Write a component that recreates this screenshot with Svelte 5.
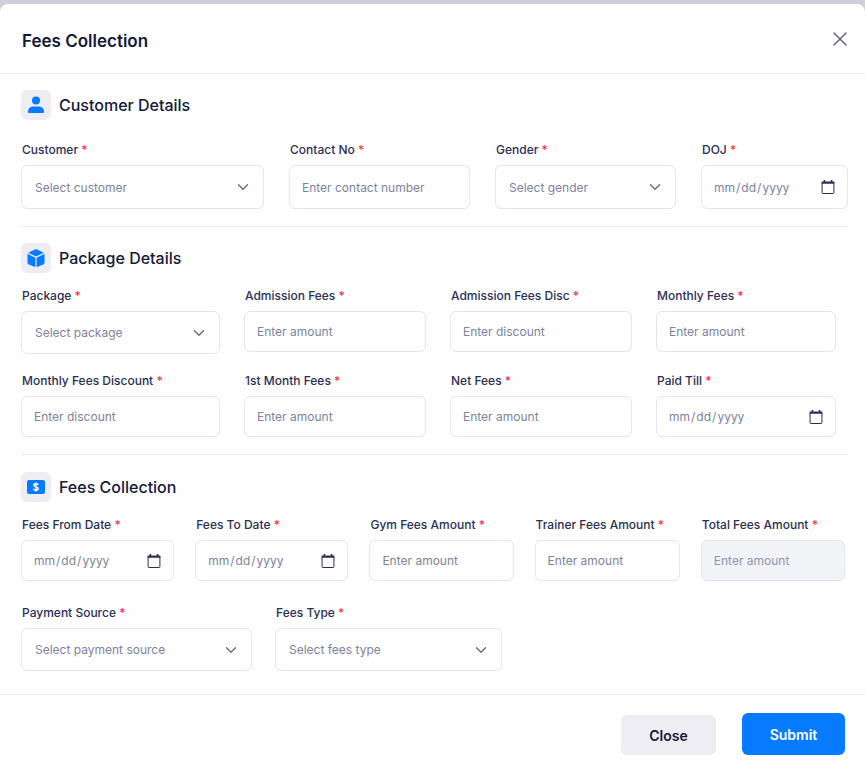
<script lang="ts">
	type Field = {
		id: string;
		label: string;
		kind: 'select' | 'text' | 'date';
		hint?: string;
		disabled?: boolean;
	};

	type Section = {
		name: string;
		title: string;
		rows: { name: string; fields: Field[] }[];
	};

	const sections: Section[] = [
		{
			name: 'customer',
			title: 'Customer Details',
			rows: [
				{
					name: 'customer-row',
					fields: [
						{ id: 'customer', label: 'Customer', kind: 'select', hint: 'Select customer' },
						{ id: 'contact', label: 'Contact No', kind: 'text', hint: 'Enter contact number' },
						{ id: 'gender', label: 'Gender', kind: 'select', hint: 'Select gender' },
						{ id: 'doj', label: 'DOJ', kind: 'date' }
					]
				}
			]
		},
		{
			name: 'package',
			title: 'Package Details',
			rows: [
				{
					name: 'package-row',
					fields: [
						{ id: 'package', label: 'Package', kind: 'select', hint: 'Select package' },
						{ id: 'admission', label: 'Admission Fees', kind: 'text', hint: 'Enter amount' },
						{ id: 'admissionDisc', label: 'Admission Fees Disc', kind: 'text', hint: 'Enter discount' },
						{ id: 'monthly', label: 'Monthly Fees', kind: 'text', hint: 'Enter amount' }
					]
				},
				{
					name: 'package-row',
					fields: [
						{ id: 'monthlyDisc', label: 'Monthly Fees Discount', kind: 'text', hint: 'Enter discount' },
						{ id: 'firstMonth', label: '1st Month Fees', kind: 'text', hint: 'Enter amount' },
						{ id: 'net', label: 'Net Fees', kind: 'text', hint: 'Enter amount' },
						{ id: 'paidTill', label: 'Paid Till', kind: 'date' }
					]
				}
			]
		},
		{
			name: 'fees',
			title: 'Fees Collection',
			rows: [
				{
					name: 'fees-row',
					fields: [
						{ id: 'from', label: 'Fees From Date', kind: 'date' },
						{ id: 'to', label: 'Fees To Date', kind: 'date' },
						{ id: 'gym', label: 'Gym Fees Amount', kind: 'text', hint: 'Enter amount' },
						{ id: 'trainer', label: 'Trainer Fees Amount', kind: 'text', hint: 'Enter amount' },
						{ id: 'total', label: 'Total Fees Amount', kind: 'text', hint: 'Enter amount', disabled: true }
					]
				},
				{
					name: 'payment-row',
					fields: [
						{ id: 'source', label: 'Payment Source', kind: 'select', hint: 'Select payment source' },
						{ id: 'type', label: 'Fees Type', kind: 'select', hint: 'Select fees type' }
					]
				}
			]
		}
	];
</script>

<form class="modal" on:submit|preventDefault>
	<header>
		<h1>Fees Collection</h1>
		<button type="button" class="dismiss" aria-label="Close dialog">
			<svg width="16" height="16" viewBox="0 0 16 16">
				<path d="M2 2L14 14M14 2L2 14" fill="none" stroke="currentColor" stroke-width="1.5" stroke-linecap="round" />
			</svg>
		</button>
	</header>

	<div class="body">
		{#each sections as section}
			<section class={section.name}>
				<div class="heading">
					<span class="tile">
						<svg width="18" height="18" viewBox="0 0 18 18" fill="currentColor">
							{#if section.name === 'customer'}
								<circle cx="9" cy="4.6" r="4" />
								<path d="M1 15.800C1 12.300 3.600 10.600 6.400 10.600h5.200c2.800 0 5.400 1.700 5.400 5.200 0 .9-.5 1.300-1.300 1.300H2.300C1.500 17.100 1 16.700 1 15.800z" />
							{:else if section.name === 'package'}
								<path d="M9 0L16.800 3.700 9 7.600 1.200 3.700z" />
								<path d="M.5 4.800L8.400 8.700v9.500L1.500 15.200Q.5 14.700.5 13.700z" />
								<path d="M17.500 4.800L9.600 8.700v9.500l6.900-3q1-.5 1-1.500z" />
							{:else}
								<rect x="0" y="2" width="18" height="14" rx="2" />
								<path
									d="M11.300 6.900C10.900 6.100 10.100 5.800 9 5.800c-1.300 0-2.200.5-2.200 1.500 0 2.200 4.500 1 4.500 3.300 0 1-.9 1.600-2.300 1.600-1.200 0-2.100-.4-2.500-1.300M9 4.600v8.800"
									fill="none"
									stroke="#fff"
									stroke-width="1.400"
								/>
							{/if}
						</svg>
					</span>
					<h2>{section.title}</h2>
				</div>

				{#each section.rows as row}
					<div class="row {row.name}">
						{#each row.fields as field}
							<div class="field">
								<label for={field.id}>{field.label} <span class="star">*</span></label>
								<div class="control">
									{#if field.kind === 'select'}
										<select id={field.id}>
											<option value="">{field.hint}</option>
										</select>
										<svg class="chevron" width="12" height="12" viewBox="0 0 12 12">
											<path d="M1.500 3.800L6 8.300l4.500-4.500" fill="none" stroke="currentColor" stroke-width="1.400" stroke-linecap="round" stroke-linejoin="round" />
										</svg>
									{:else if field.kind === 'date'}
										<input type="date" id={field.id} />
										<svg class="calendar" width="14" height="14" viewBox="0 0 14 14">
											<path d="M1.100 2.500h11.800v10.200q0 .8-.8.8H1.900q-.8 0-.8-.8z" fill="none" stroke="currentColor" stroke-width="1" />
											<path d="M.6 2.200q0-.8.8-.8h11.200q.8 0 .8.800v1.600H.6zM2.600 0h1.600v2H2.600zM9.800 0h1.600v2H9.800z" fill="currentColor" />
										</svg>
									{:else}
										<input type="text" id={field.id} placeholder={field.hint} disabled={field.disabled} />
									{/if}
								</div>
							</div>
						{/each}
					</div>
				{/each}
			</section>
		{/each}
	</div>

	<footer>
		<button type="button" class="close">Close</button>
		<button type="submit" class="submit">Submit</button>
	</footer>
</form>

<style>
	:global(body) {
		background: #cdd0d8;
	}

	.modal,
	.modal * {
		box-sizing: border-box;
	}

	.modal {
		margin-top: 4px;
		background: #fefefe;
		border-radius: 8px 8px 0 0;
		color: #14193a;
		font-family: Inter, 'Liberation Sans', sans-serif;
	}

	header {
		display: flex;
		align-items: center;
		justify-content: space-between;
		height: 70px;
		padding: 5px 17px 0 22px;
		border-bottom: 1px solid #e9e9f1;
	}

	h1,
	h2 {
		margin: 0;
	}

	h1 {
		font-size: 17px;
		font-weight: 600;
		line-height: 24px;
	}

	h2 {
		font-size: 16px;
		font-weight: 500;
		line-height: 20px;
	}

	button {
		border: 0;
		font-family: inherit;
		cursor: pointer;
	}

	.dismiss {
		display: flex;
		padding: 0;
		margin-bottom: 4px;
		background: none;
		color: #5f6684;
	}

	.body {
		padding: 0 17px 0 21px;
	}

	section {
		padding: 16px 0 17px;
		border-bottom: 1px solid #e9e9f1;
	}

	section:last-child {
		padding: 17px 0 23px;
		border-bottom: 0;
	}

	.heading {
		display: flex;
		align-items: center;
		gap: 8px;
		margin-bottom: 14px;
	}

	.customer .heading {
		margin-bottom: 21px;
	}

	.tile {
		display: flex;
		align-items: center;
		justify-content: center;
		width: 30px;
		height: 30px;
		border-radius: 6px;
		background: #ededf3;
		color: #067bff;
	}

	.row {
		display: grid;
		align-items: start;
	}

	.customer-row {
		grid-template-columns: 243fr 181fr 181fr 147fr;
		gap: 25px;
	}

	.package-row {
		grid-template-columns: 199fr 182fr 182fr 180fr;
		gap: 24px;
		padding-right: 12px;
	}

	.package-row + .package-row {
		margin-top: 18px;
	}

	.fees-row {
		grid-template-columns: 153fr 153fr 144fr 145fr 144fr;
		gap: 21px;
		padding-right: 3px;
	}

	.payment-row {
		grid-template-columns: 231fr 227fr 323fr;
		gap: 23px;
		margin-top: 23px;
	}

	label {
		display: block;
		margin-bottom: 6px;
		padding-left: 1px;
		font-size: 12px;
		font-weight: 500;
		line-height: 18px;
		color: #2b3052;
		white-space: nowrap;
	}

	.star {
		color: #f5364c;
	}

	/* icon shares the grid cell with its control */
	.control {
		display: grid;
		align-items: center;
	}

	.control > * {
		grid-area: 1 / 1;
	}

	.control svg {
		justify-self: end;
		pointer-events: none;
	}

	.chevron {
		margin-right: 15px;
		color: #646b86;
	}

	.calendar {
		margin-right: 13px;
		color: #2b3052;
	}

	input,
	select {
		width: 100%;
		min-width: 0;
		height: 41px;
		margin: 0;
		padding: 0 12px;
		border: 1px solid #e4e5ee;
		border-radius: 6px;
		background: #fefefe;
		font-family: inherit;
		font-size: 12px;
		color: #7d849c;
		appearance: none;
	}

	select {
		height: 43px;
		padding-left: 13px;
	}

	.customer input,
	.customer select {
		height: 44px;
	}

	input::placeholder {
		color: #7d849c;
		opacity: 1;
	}

	input:disabled {
		background: #f2f3f7;
	}

	input:disabled::placeholder {
		color: #8f95aa;
	}

	input[type='date'] {
		padding-left: 11px;
	}

	input[type='date']::-webkit-calendar-picker-indicator {
		opacity: 0;
	}

	footer {
		display: flex;
		align-items: flex-end;
		justify-content: flex-end;
		gap: 26px;
		padding: 18px 20px 6px;
		border-top: 1px solid #e9e9f1;
	}

	footer button {
		border-radius: 6px;
		font-size: 14px;
		font-weight: 600;
	}

	.close {
		width: 95px;
		height: 40px;
		background: #ededf3;
		color: #14193a;
	}

	.submit {
		width: 103px;
		height: 42px;
		background: #067bff;
		color: #fff;
	}
</style>
